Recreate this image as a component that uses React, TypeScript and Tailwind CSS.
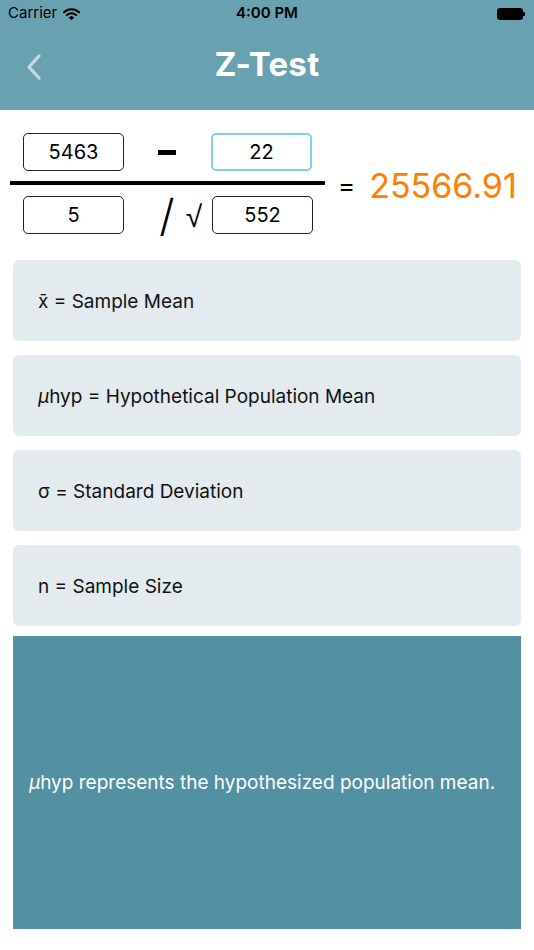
import React from "react";

function Wifi() {
  return (
    <svg width="17" height="12" viewBox="0 0 17 12" className="ml-[6px]">
      <path d="M1 4.2 A11 11 0 0 1 16 4.2" stroke="black" strokeWidth="2" fill="none" strokeLinecap="round" />
      <path d="M3.8 7 A7 7 0 0 1 13.2 7" stroke="black" strokeWidth="2" fill="none" strokeLinecap="round" />
      <path d="M6.3 9.6 A3.3 3.3 0 0 1 10.7 9.6 L8.5 11.8 Z" fill="black" stroke="black" strokeWidth="1" strokeLinejoin="round" />
    </svg>
  );
}

function Box({ v, active }: { v: string; active?: boolean }) {
  return (
    <div
      className={
        active
          ? "w-[101px] h-[38px] shrink-0 rounded-[5px] border-2 border-[#80d0e8] flex items-center justify-center text-[20px] text-black"
          : "w-[101px] h-[38px] shrink-0 rounded-[5px] border border-[#222] flex items-center justify-center text-[20px] text-black"
      }
    >
      {v}
    </div>
  );
}

function Card({ children }: { children: React.ReactNode }) {
  return (
    <div className="h-[81px] rounded-[6px] bg-[#e3ebee] flex items-center pl-[25px] pt-[3px] text-[19px] text-[#111]">
      {children}
    </div>
  );
}

export default function App() {
  return (
    <div className="w-[534px] h-[950px] bg-white overflow-hidden font-['Inter','Noto_Sans',sans-serif]">
      <div className="h-[110px] bg-[#6aa1b1] flex flex-col">
        <div className="h-[27px] grid grid-cols-3 items-center px-[8px] text-[15px] text-black">
          <div className="flex items-center">
            <span>Carrier</span>
            <Wifi />
          </div>
          <div className="text-center font-semibold">4:00 PM</div>
          <div className="flex justify-end items-center pr-[1px]">
            <div className="w-[26px] h-[12px] rounded-[3px] bg-black" />
            <div className="w-[2px] h-[4px] bg-black rounded-r-[1px]" />
          </div>
        </div>
        <div className="flex-1 flex items-center justify-center relative pb-[8px]">
          <svg width="16" height="26" viewBox="0 0 16 26" className="absolute left-[26px] top-[27px]">
            <path d="M13 2 L3 13 L13 24" stroke="#c3dce3" strokeWidth="3.2" fill="none" strokeLinecap="round" strokeLinejoin="round" />
          </svg>
          <span className="text-white font-bold text-[33px] tracking-[0.3px]">Z-Test</span>
        </div>
      </div>

      <div className="h-[150px] flex items-start pt-[23px]">
        <div className="ml-[10px] w-[315px] shrink-0 flex flex-col">
          <div className="h-[38px] flex items-center pl-[13px]">
            <Box v="5463" />
            <div className="ml-[34px] w-[18px] h-[5px] bg-black shrink-0" />
            <div className="ml-[35px]">
              <Box v="22" active />
            </div>
          </div>
          <div className="mt-[10px] h-[4px] bg-black" />
          <div className="mt-[11px] h-[38px] flex items-center pl-[13px]">
            <Box v="5" />
            <span className="ml-[34px] w-[18px] h-[38px] flex items-center justify-center text-[44px] leading-none font-light text-black">/</span>
            <span className="ml-[8px] w-[20px] h-[38px] flex items-center justify-center text-[30px] leading-none text-black font-['Liberation_Sans',sans-serif] pt-[3px]">√</span>
            <div className="ml-[8px]">
              <Box v="552" />
            </div>
          </div>
        </div>
        <div className="flex items-center mt-[36px] ml-[13px]">
          <span className="text-[26px] leading-none text-black">=</span>
          <span className="ml-[14px] text-[34px] leading-none text-[#ff8000]">25566.91</span>
        </div>
      </div>

      <div className="mx-[13px] flex flex-col gap-[14px]">
        <Card>x̄ = Sample Mean</Card>
        <Card>
          <span className="italic">μ</span>hyp = Hypothetical Population Mean
        </Card>
        <Card>σ = Standard Deviation</Card>
        <Card>n = Sample Size</Card>
      </div>

      <div className="mx-[13px] mt-[10px] h-[293px] bg-[#5290a2] flex items-center pl-[16px] pt-[2px] text-white text-[19px]">
        <span>
          <span className="italic">μ</span>hyp represents the hypothesized population mean.
        </span>
      </div>
    </div>
  );
}
